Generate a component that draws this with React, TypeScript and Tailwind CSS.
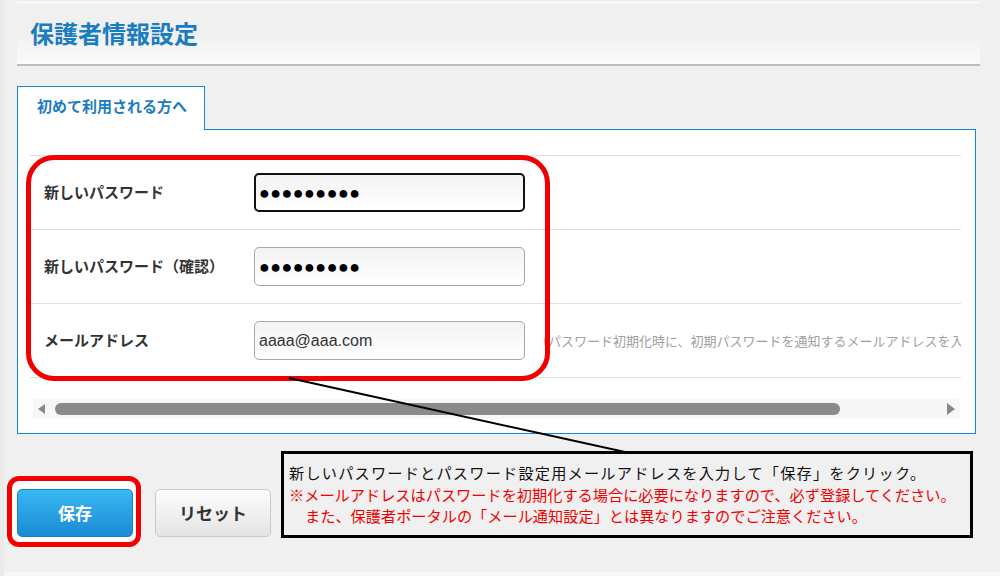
export default function App() {
  const jp = { fontFamily: '"Noto Sans CJK JP", "Noto Sans", sans-serif' };

  const rows = [
    { label: '新しいパスワード', kind: 'pw', focus: true },
    { label: '新しいパスワード（確認）', kind: 'pw', focus: false },
    { label: 'メールアドレス', kind: 'mail', focus: false },
  ];

  return (
    <div className="relative w-[1000px] h-[576px] overflow-hidden bg-[#ebebeb] pl-[4px]" style={jp}>
      <div className="h-[572px] bg-[#f0f0f0] pr-[20px] pt-[2px] pl-[13px]">
        {/* header */}
        <div className="h-[64px] border-t border-white border-b-2 border-b-[#bdbdbd] bg-gradient-to-b from-[#f0f0f0] from-50% to-[#fbfbfb] pl-[13px] pt-[14px]">
          <h1 className="text-[24px] leading-[32px] font-bold text-[#1a7cc1]">保護者情報設定</h1>
        </div>

        {/* tab */}
        <div className="mt-[20px] flex">
          <div className="relative z-10 w-[188px] h-[44px] bg-white border border-b-0 border-[#1588d6] pl-[19px] pt-[8px] text-[15px] font-bold text-[#1a7cc1]">
            初めて利用される方へ
          </div>
        </div>

        {/* panel */}
        <div className="-mt-[1px] w-[959px] h-[305px] bg-white border border-[#1588d6] pt-[25px] pl-[12px] pr-[14px]">
          <div className="overflow-hidden">
            <div className="border-t border-[#dedede] w-[1200px]">
              {rows.map((r) => (
                <div key={r.label} className="h-[74px] border-b border-[#dedede] flex items-center">
                  <div className="w-[224px] pl-[14px] text-[15px] font-bold text-[#333]">{r.label}</div>
                  {r.kind === 'pw' ? (
                    <div
                      className={`w-[271px] h-[39px] rounded-[5px] bg-gradient-to-b from-[#f3f3f3] to-white flex items-center pl-[3px] ${
                        r.focus ? 'border-2 border-[#111]' : 'border border-[#a8a8a8] pl-[4px]'
                      }`}
                    >
                      <span className="text-[18px] leading-none text-black tracking-[0.4px]" style={{ fontFamily: '"Liberation Sans", sans-serif' }}>
                        ●●●●●●●●●
                      </span>
                    </div>
                  ) : (
                    <>
                      <div className="w-[271px] h-[39px] rounded-[5px] border border-[#a8a8a8] bg-gradient-to-b from-[#f3f3f3] to-white flex items-center pl-[4px]">
                        <span className="text-[16px] text-[#333]" style={{ fontFamily: '"Liberation Sans", sans-serif' }}>aaaa@aaa.com</span>
                      </div>
                      <span className="ml-[10px] text-[13px] text-[#a0a0a0] whitespace-nowrap">
                        （パスワード初期化時に、初期パスワードを通知するメールアドレスを入力してください）
                      </span>
                    </>
                  )}
                </div>
              ))}
            </div>
          </div>

          {/* scrollbar */}
          <div className="mt-[21px] ml-[3px] w-[927px] h-[20px] bg-[#f7f7f7] flex items-center">
            <div className="ml-[5px] w-0 h-0 border-y-[5px] border-y-transparent border-r-[7px] border-r-[#888]" />
            <div className="ml-[10px] w-[785px] h-[12px] rounded-full bg-[#8a8a8a]" />
            <div className="ml-auto mr-[5px] w-0 h-0 border-y-[6px] border-y-transparent border-l-[8px] border-l-[#888]" />
          </div>
        </div>

        {/* buttons */}
        <div className="mt-[55px] flex gap-[22px]">
          <button className="relative z-10 w-[116px] h-[48px] rounded-[5px] border border-[#1c82c8] bg-gradient-to-b from-[#38b8f2] to-[#198bd5] text-white text-[17px] font-bold">
            保存
          </button>
          <button className="w-[116px] h-[48px] rounded-[5px] border border-[#cacaca] bg-gradient-to-b from-[#fdfdfd] to-[#e4e4e4] text-[#333] text-[17px] font-bold">
            リセット
          </button>
        </div>
      </div>
      <div className="h-[4px] bg-[#f7f7f7]" />

      {/* annotations */}
      <div className="absolute left-[26px] top-[155px] w-[524px] h-[226px] border-[5px] border-[#f00000] rounded-[28px]" />
      <div className="absolute left-[7px] top-[476px] w-[134px] h-[71px] border-[5px] border-[#f00000] rounded-[12px] bg-white" />
      <svg className="absolute left-0 top-0" width="1000" height="576">
        <line x1="289" y1="378" x2="625" y2="452" stroke="#000" strokeWidth="2" />
      </svg>
      <div className="absolute left-[281px] top-[451px] w-[692px] h-[87px] border-[3px] border-black bg-[#f0f0f0] pl-[5px] pt-[8px] text-[15.2px] leading-[21.5px]">
        <div className="text-[#111] tracking-[1.2px]">新しいパスワードとパスワード設定用メールアドレスを入力して「保存」をクリック。</div>
        <div className="text-[#f00000]">※メールアドレスはパスワードを初期化する場合に必要になりますので、必ず登録してください。</div>
        <div className="text-[#f00000] pl-[16px]">また、保護者ポータルの「メール通知設定」とは異なりますのでご注意ください。</div>
      </div>
    </div>
  );
}
